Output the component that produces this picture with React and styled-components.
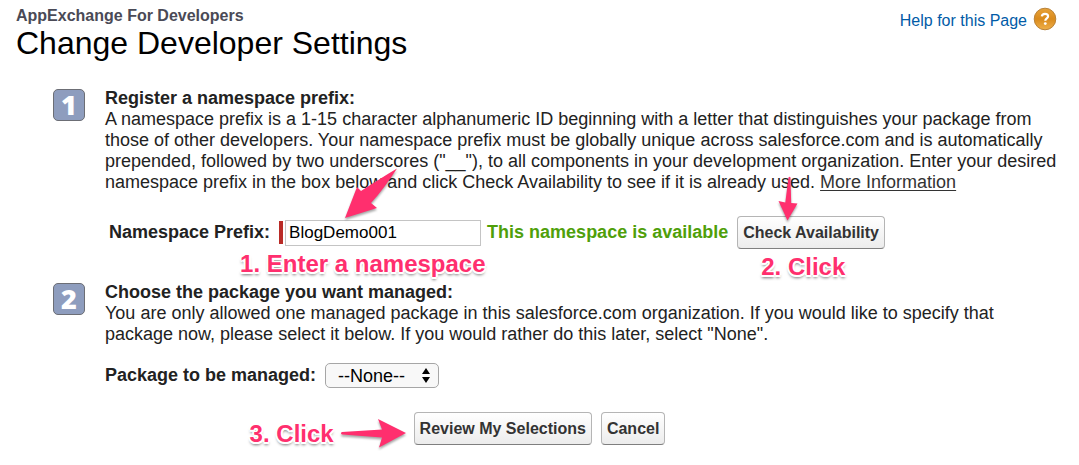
import React from "react";
import styled, { createGlobalStyle } from "styled-components";

const PINK = "#ff2f6e";

const GlobalStyle = createGlobalStyle`
  *, *::before, *::after { box-sizing: border-box; }
  body {
    margin: 0;
    background: #fff;
    color: #222;
    font-family: "Liberation Sans", Arial, Helvetica, sans-serif;
    font-size: 18px;
    line-height: 21px;
  }
`;

const Page = styled.main`
  padding: 7px 16px 20px;
`;

const Header = styled.header`
  display: flex;
  justify-content: space-between;
  align-items: flex-start;
`;

const Title = styled.h1`
  margin: 0;
  color: #000;
  font-size: 32px;
  line-height: 36px;
  font-weight: 400;
`;

const Eyebrow = styled.p`
  margin: 0;
  color: #4a4a56;
  font-size: 16px;
  line-height: 18px;
  font-weight: 700;
`;

const HelpLink = styled.a`
  display: flex;
  align-items: flex-end;
  gap: 6px;
  padding-right: 6px;
  color: #015ba7;
  font-size: 16px;
  line-height: 20px;
  text-decoration: none;
  white-space: nowrap;
`;

const Form = styled.form`
  display: flex;
  flex-direction: column;
  padding-top: 27px;
`;

const Step = styled.section`
  display: grid;
  grid-template-columns: 32px 1fr;
  column-gap: 20px;
  padding-left: 37px;
  margin-bottom: ${(p) => p.$gap}px;
`;

const StepNumber = styled.span`
  display: flex;
  align-items: center;
  justify-content: center;
  width: 32px;
  height: 32px;
  margin-top: 1px;
  border: 1px solid #6c6e75;
  border-radius: 5px;
  background: #8e9dbe;
  color: #fff;
  font-family: "Open Sans", "Liberation Sans", sans-serif;
  font-size: 27px;
  line-height: 30px;
  font-weight: 800;
`;

const StepTitle = styled.h2`
  margin: 0;
  font-size: 18px;
  line-height: 21px;
  font-weight: 700;
`;

const StepText = styled.p`
  margin: 0;
`;

const InfoLink = styled.a`
  color: #333;
  text-underline-offset: 2px;
`;

const FieldRow = styled.div`
  display: flex;
  align-items: center;
  gap: 9px;
  margin-top: ${(p) => p.$top}px;
  padding-left: ${(p) => p.$indent || 0}px;
`;

const Label = styled.label`
  font-weight: 700;
  white-space: nowrap;
`;

const Anchor = styled.span`
  position: relative;
  display: inline-flex;
`;

const FieldGroup = styled.span`
  display: flex;
  align-items: center;
  gap: 6px;
`;

const RequiredField = styled(Anchor)`
  align-items: center;
  gap: 2px;

  &::before {
    content: "";
    width: 4px;
    height: 23px;
    background: #b92b27;
  }
`;

const TextInput = styled.input`
  width: 196px;
  height: 26px;
  padding: 0 3px;
  border: 1px solid #c4c4c4;
  border-radius: 0;
  background: #fff;
  color: #000;
  font: 17px "Liberation Sans", Arial, sans-serif;
  outline: none;
`;

const Status = styled.output`
  color: #4f9f0a;
  font-weight: 700;
  white-space: nowrap;
`;

const Button = styled.button`
  height: 33px;
  padding: 0 5px;
  border: 1px solid #b5b5b5;
  border-bottom-color: #7f7f7f;
  border-radius: 4px;
  background: linear-gradient(#fff, #ececec);
  color: #333;
  font: 700 16px "Liberation Sans", Arial, sans-serif;
  white-space: nowrap;
  cursor: pointer;
`;

const SelectBox = styled(Anchor)`
  svg {
    position: absolute;
    right: 8px;
    top: 4px;
    pointer-events: none;
  }
`;

const Select = styled.select`
  appearance: none;
  width: 114px;
  height: 25px;
  padding: 0 12px;
  border: 1px solid #a6a6a6;
  border-radius: 5px;
  background: #f8f8f8;
  color: #000;
  font: 18px "Liberation Sans", Arial, sans-serif;
`;

const Actions = styled.div`
  display: flex;
  justify-content: center;
  gap: 9px;
`;

const Callout = styled.span`
  position: absolute;
  z-index: 2;
  left: ${(p) => p.$x}px;
  top: ${(p) => p.$y}px;
  color: ${PINK};
  font-size: 24px;
  line-height: 28px;
  font-weight: 700;
  white-space: nowrap;
  pointer-events: none;
  text-shadow: -1px -1px 0 #fff, 1px -1px 0 #fff, -2px 0 0 #fff, 2px 0 0 #fff,
    -1px 2px 0 #fff, 1px 2px 0 #fff, 0 3px 3px rgba(0, 0, 0, 0.55);
`;

const ArrowSvg = styled.svg`
  position: absolute;
  z-index: 3;
  left: ${(p) => p.$x}px;
  top: ${(p) => p.$y}px;
  overflow: visible;
  pointer-events: none;
  fill: ${PINK};
  filter: drop-shadow(0 2px 1px rgba(0, 0, 0, 0.35));
`;

function Arrow({ x, y, width, height, d }) {
  return (
    <ArrowSvg $x={x} $y={y} width={width} height={height} aria-hidden="true">
      <path d={d} />
    </ArrowSvg>
  );
}

function HelpIcon() {
  return (
    <svg width="24" height="24" viewBox="0 0 24 24" aria-hidden="true">
      <defs>
        <linearGradient id="amber" x1="0" y1="0" x2="0" y2="1">
          <stop offset="0" stopColor="#e8a33a" />
          <stop offset="0.5" stopColor="#d98a1c" />
          <stop offset="1" stopColor="#f0b04a" />
        </linearGradient>
      </defs>
      <circle cx="12" cy="12" r="10.8" fill="url(#amber)" stroke="#b98238" strokeWidth="1" />
      <path
        d="M8.8 9.4C9 7.6 10.2 6.8 12 6.8C13.8 6.800 15.100 7.700 15.100 9.200C15.100 11.300 12.300 11.300 12.300 13.800"
        fill="none"
        stroke="#fff"
        strokeWidth="2.2"
      />
      <circle cx="12.3" cy="16.6" r="1.4" fill="#fff" />
    </svg>
  );
}

export default function App() {
  return (
    <>
      <GlobalStyle />
      <Page>
        <Header>
          <div>
            <Eyebrow>AppExchange For Developers</Eyebrow>
            <Title>Change Developer Settings</Title>
          </div>
          <HelpLink href="#help">
            Help for this Page
            <HelpIcon />
          </HelpLink>
        </Header>

        <Form onSubmit={(e) => e.preventDefault()}>
          <Step $gap={33}>
            <StepNumber>1</StepNumber>
            <div>
              <StepTitle>Register a namespace prefix:</StepTitle>
              <StepText>
                A namespace prefix is a 1-15 character alphanumeric ID beginning with a letter that
                distinguishes your package from those of other developers. Your namespace prefix
                must be globally unique across salesforce.com and is automatically prepended,
                followed by two underscores ("__"), to all components in your development
                organization. Enter your desired namespace prefix in the box below and click Check
                Availability to see if it is already used.{" "}
                <InfoLink href="#more">More Information</InfoLink>
              </StepText>
              <FieldRow $top={23} $indent={4}>
                <Label htmlFor="prefix">Namespace Prefix:</Label>
                <FieldGroup>
                  <RequiredField>
                    <TextInput id="prefix" type="text" defaultValue="BlogDemo001" />
                    <Arrow
                      x={60}
                      y={-52}
                      width={54}
                      height={52}
                      d="M6 50L18 19L22 23C33 16 45 8 58 0.500C50 13 41 25 32 35L38 40Z"
                    />
                    <Callout $x={-39} $y={30}>1. Enter a namespace</Callout>
                  </RequiredField>
                  <Status htmlFor="prefix">This namespace is available</Status>
                </FieldGroup>
                <Anchor>
                  <Button type="button">Check Availability</Button>
                  <Arrow
                    x={41}
                    y={-40}
                    width={20}
                    height={46}
                    d="M9.500 44.500L0.500 25L7.300 26.500L10.500 1.500Q11.500 0 12.500 1.500L13.200 27L19.500 27.500Z"
                  />
                  <Callout $x={24} $y={37}>2. Click</Callout>
                </Anchor>
              </FieldRow>
            </div>
          </Step>

          <Step $gap={24}>
            <StepNumber>2</StepNumber>
            <div>
              <StepTitle>Choose the package you want managed:</StepTitle>
              <StepText>
                You are only allowed one managed package in this salesforce.com organization. If you
                would like to specify that package now, please select it below. If you would rather
                do this later, select "None".
              </StepText>
              <FieldRow $top={18}>
                <Label htmlFor="package">Package to be managed:</Label>
                <SelectBox>
                  <Select id="package" defaultValue="none">
                    <option value="none">--None--</option>
                  </Select>
                  <svg width="10" height="17" viewBox="0 0 10 17" aria-hidden="true">
                    <path d="M5 1L9 7H1ZM1 10H9L5 16Z" fill="#000" />
                  </svg>
                </SelectBox>
              </FieldRow>
            </div>
          </Step>

          <Actions>
            <Anchor>
              <Button type="submit">Review My Selections</Button>
              <Callout $x={-164} $y={8}>3. Click</Callout>
              <Arrow
                x={-74}
                y={6}
                width={66}
                height={30}
                d="M66 15L38 1L42 11.500L2 14Q0 15.200 2 16.500L42 19.500L39 29.500Z"
              />
            </Anchor>
            <Button type="button">Cancel</Button>
          </Actions>
        </Form>
      </Page>
    </>
  );
}
